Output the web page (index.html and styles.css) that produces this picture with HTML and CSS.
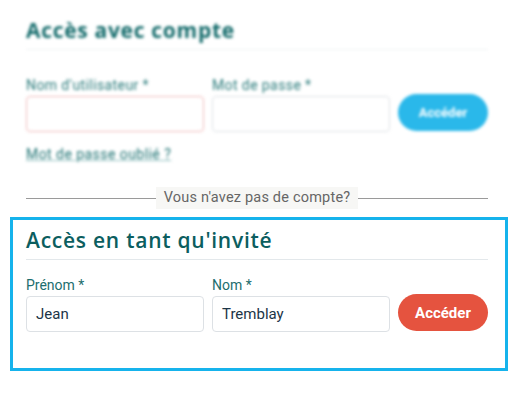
FILE: index.html
```html
<!DOCTYPE html>
<html lang="fr">
<head>
<meta charset="utf-8">
<link rel="stylesheet" href="styles.css">
</head>
<body>
<div class="page">
  <section class="account">
    <h2 class="title title-bold">Accès avec compte</h2>
    <div class="row">
      <div class="field">
        <label class="label">Nom d'utilisateur *</label>
        <div class="input input-error"></div>
      </div>
      <div class="field">
        <label class="label">Mot de passe *</label>
        <div class="input"></div>
      </div>
      <button class="btn btn-blue">Accéder</button>
    </div>
    <a class="forgot">Mot de passe oublié ?</a>
  </section>

  <div class="divider">
    <span class="line"></span>
    <span class="divider-text">Vous n'avez pas de compte?</span>
    <span class="line"></span>
  </div>

  <section class="guest">
    <h2 class="title">Accès en tant qu'invité</h2>
    <div class="row">
      <div class="field">
        <label class="label">Prénom *</label>
        <div class="input">Jean</div>
      </div>
      <div class="field">
        <label class="label">Nom *</label>
        <div class="input">Tremblay</div>
      </div>
      <button class="btn btn-red">Accéder</button>
    </div>
  </section>
</div>
</body>
</html>
```
FILE: styles.css
```css
* { box-sizing: border-box; }
html, body { margin: 0; padding: 0; background: #fff; }
body { font-family: Roboto, "Liberation Sans", sans-serif; }

.page {
  width: 515px;
  padding: 16px 27px 0 26px;
}

.account {
  filter: blur(1.4px);
}

.title {
  margin: 0;
  font-family: "Open Sans", sans-serif;
  font-weight: 600;
  font-size: 21px;
  line-height: 28px;
  color: #0c5e5f;
  padding-bottom: 5px;
  border-bottom: 1px solid #e3e8eb;
  letter-spacing: 0.75px;
}
.title-bold {
  font-weight: 700;
  color: #136b6b;
  border-bottom-color: #eef2f3;
  letter-spacing: 0.7px;
}

.row {
  display: flex;
  align-items: flex-end;
  gap: 8px;
  margin-top: 17px;
}
.account .row { margin-top: 27px; }
.field {
  display: flex;
  flex-direction: column;
  width: 178px;
}
.label {
  font-size: 14px;
  line-height: 16px;
  color: #1d6e6e;
  margin-bottom: 3px;
}
.account .label { color: #2a7b7b; font-size: 14px; letter-spacing: 0.4px; }
.input {
  height: 36px;
  border: 1px solid #dde1e5;
  border-radius: 4px;
  padding: 0 9px;
  font-size: 15px;
  line-height: 34px;
  color: #1c3547;
}
.input-error { border: 1.5px solid #f0b9b9; }

.btn {
  width: 90px;
  height: 37px;
  margin-bottom: 1px;
  border: none;
  border-radius: 19px;
  font-family: Roboto, sans-serif;
  font-weight: 700;
  font-size: 15px;
  color: #fff;
  padding: 0;
}
.btn-blue { background: #2ab8ea; font-size: 13px; }
.btn-red { background: #e5533f; }

.forgot {
  display: inline-block;
  margin-top: 15px;
  font-size: 14px;
  line-height: 15px;
  letter-spacing: 0.45px;
  color: #1d7272;
  text-decoration: underline;
  text-decoration-color: #8fbfbf;
}

.divider {
  display: flex;
  align-items: center;
  margin-top: 24px;
}
.line {
  flex: 1;
  height: 1px;
  background: #9a9a9a;
}
.divider-text {
  background: #f7f7f5;
  padding: 0 8px;
  font-size: 14.5px;
  line-height: 22px;
  letter-spacing: 0.2px;
  color: #666;
}

.guest {
  margin: 8px -20px 0 -16px;
  border: 3px solid #16b3ec;
  padding: 6px 17px 36px 13px;
}
```
